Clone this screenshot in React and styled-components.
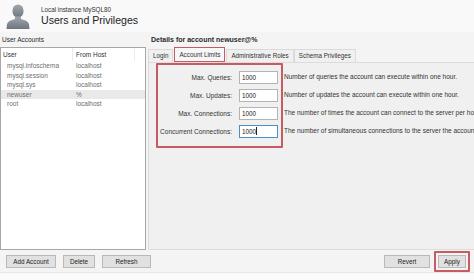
import React from 'react';
import styled, { createGlobalStyle } from 'styled-components';

const GlobalStyle = createGlobalStyle`
  html, body {
    margin: 0;
    padding: 0;
    background: #f4f4f4;
  }
  body {
    font-family: "Liberation Sans", Arial, sans-serif;
    color: #1e1e1e;
  }
`;

const Window = styled.div`
  width: 474px;
  height: 280px;
  display: flex;
  flex-direction: column;
  background: #f4f4f4;
  overflow: hidden;
`;

const Header = styled.div`
  height: 32px;
  display: flex;
  align-items: center;
  gap: 10px;
  padding-left: 5px;
  background: #f9f9f9;
`;

const Titles = styled.div`
  display: flex;
  flex-direction: column;
  gap: 1px;
`;

const Instance = styled.div`
  font-size: 6.3px;
  color: #333;
`;

const Title = styled.div`
  font-size: 10.6px;
  color: #222;
`;

const Body = styled.div`
  height: 218px;
  display: flex;
`;

const LeftColumn = styled.div`
  width: 146px;
  display: flex;
  flex-direction: column;
`;

const RightColumn = styled.div`
  flex: 1;
  margin-left: 2px;
  display: flex;
  flex-direction: column;
  min-width: 0;
`;

const SectionLabel = styled.div`
  height: 15px;
  line-height: 15px;
  padding-left: ${({ $indent }) => $indent}px;
  font-size: ${({ $bold }) => ($bold ? '7px' : '6.5px')};
  font-weight: ${({ $bold }) => ($bold ? 700 : 400)};
  color: #2a2a2a;
`;

const ListBox = styled.div`
  flex: 1;
  background: #fff;
  border: 1px solid #a7a7a7;
  display: flex;
  flex-direction: column;
`;

const ListHeader = styled.div`
  height: 13px;
  display: grid;
  grid-template-columns: 72px 62px 1fr;
  font-size: 6.5px;
  color: #333;
`;

const HeaderCell = styled.div`
  padding-left: ${({ $pad }) => $pad}px;
  line-height: 13px;
  border-right: 1px solid #ececec;
`;

const ListRow = styled.div`
  height: 9.6px;
  display: grid;
  grid-template-columns: 72px 1fr;
  font-size: 6.5px;
  line-height: 9.6px;
  color: #6e6e6e;
  background: ${({ $selected }) => ($selected ? '#e9e9e9' : 'transparent')};
`;

const RowCell = styled.div`
  padding-left: ${({ $pad }) => $pad}px;
  white-space: nowrap;
`;

const TabStrip = styled.div`
  height: 15px;
  display: flex;
  align-items: flex-end;
`;

const Tab = styled.div`
  height: ${({ $active }) => ($active ? 13 : 12)}px;
  line-height: ${({ $active }) => ($active ? 13 : 12)}px;
  padding: 0 ${({ $pad }) => $pad}px;
  font-size: 6.3px;
  color: #333;
  white-space: nowrap;
  background: ${({ $active }) => ($active ? '#f7f7f7' : '#f0f0f0')};
  border: ${({ $active }) => ($active ? '1.5px solid #c75b63' : '1px solid #dadada')};
  border-bottom: ${({ $active }) => ($active ? '1.5px solid #c75b63' : 'none')};
  margin-left: ${({ $active }) => ($active ? '1px' : '0')};
  margin-right: ${({ $active }) => ($active ? '1px' : '0')};
`;

const Pane = styled.div`
  flex: 1;
  background: #f0f0f0;
  border: 1px solid #dcdcdc;
  border-right: none;
  padding: 0 0 0 7px;
  display: flex;
  align-items: flex-start;
  overflow: hidden;
`;

const LimitsBox = styled.div`
  width: 120px;
  padding: 3px 3px 6px 0;
  border: 2px solid #c75b63;
  border-radius: 1px;
  display: flex;
  flex-direction: column;
  flex-shrink: 0;
`;

const FieldRow = styled.div`
  height: 18px;
  display: flex;
  align-items: center;
  justify-content: flex-end;
  gap: 7px;
`;

const FieldLabel = styled.div`
  font-size: 6.5px;
  color: #333;
  white-space: nowrap;
  text-align: right;
`;

const Field = styled.div`
  width: 35px;
  height: 11px;
  line-height: 11px;
  padding-left: 2px;
  font-size: 6.3px;
  color: #222;
  background: #fff;
  border: 1px solid ${({ $focused }) => ($focused ? '#4a90c8' : '#b4b4b4')};
`;

const Caret = styled.span`
  display: inline-block;
  width: 1px;
  height: 8px;
  vertical-align: -1px;
  background: #222;
`;

const Descriptions = styled.div`
  padding-top: 5px;
  margin-left: 1px;
  display: flex;
  flex-direction: column;
`;

const Description = styled.div`
  height: 18px;
  line-height: 18px;
  font-size: 6.5px;
  color: #333;
  white-space: nowrap;
`;

const ButtonBar = styled.div`
  height: 22px;
  display: flex;
  align-items: center;
  padding: 0 4px 0 6px;
`;

const ButtonGroup = styled.div`
  display: flex;
  align-items: center;
  gap: ${({ $gap }) => $gap}px;
`;

const Spacer = styled.div`
  flex: 1;
`;

const Button = styled.div`
  width: ${({ $width }) => $width}px;
  height: 11px;
  line-height: 11px;
  text-align: center;
  font-size: 6.3px;
  color: #222;
  background: #e1e1e1;
  border: 1px solid #b9b9b9;
`;

const Highlight = styled.div`
  padding: 2px 2px;
  border: 2px solid #c75b63;
  border-radius: 1px;
`;

const StatusStrip = styled.div`
  flex: 1;
  background: #fafafa;
  border-top: 1px solid #e6e6e6;
`;

const PersonIcon = () => (
  <svg width="26" height="26" viewBox="0 0 26 26">
    <defs>
      <linearGradient id="person" x1="0" y1="0" x2="0" y2="1">
        <stop offset="0" stopColor="#a3a8b0" />
        <stop offset="1" stopColor="#6f757d" />
      </linearGradient>
    </defs>
    <ellipse cx="13" cy="8" rx="5.6" ry="6.6" fill="url(#person)" />
    <path d="M10 13.5 L10 16 Q3 17.5 2 21 L1.5 26 L24.5 26 L24 21 Q23 17.5 16 16 L16 13.5 Z" fill="url(#person)" />
  </svg>
);

const accounts = [
  { user: 'mysql.infoschema', host: 'localhost' },
  { user: 'mysql.session', host: 'localhost' },
  { user: 'mysql.sys', host: 'localhost' },
  { user: 'newuser', host: '%', selected: true },
  { user: 'root', host: 'localhost' },
];

const limits = [
  { label: 'Max. Queries:', text: 'Number of queries the account can execute within one hour.' },
  { label: 'Max. Updates:', text: 'Number of updates the account can execute within one hour.' },
  { label: 'Max. Connections:', text: 'The number of times the account can connect to the server per hour.' },
  { label: 'Concurrent Connections:', text: 'The number of simultaneous connections to the server the account can have.', focused: true },
];

const tabs = [
  { name: 'Login', pad: 4 },
  { name: 'Account Limits', pad: 4, active: true },
  { name: 'Administrative Roles', pad: 4 },
  { name: 'Schema Privileges', pad: 4 },
];

const App = () => (
  <Window>
    <GlobalStyle />
    <Header>
      <PersonIcon />
      <Titles>
        <Instance>Local instance MySQL80</Instance>
        <Title>Users and Privileges</Title>
      </Titles>
    </Header>

    <Body>
      <LeftColumn>
        <SectionLabel $indent={2}>User Accounts</SectionLabel>
        <ListBox>
          <ListHeader>
            <HeaderCell $pad={2}>User</HeaderCell>
            <HeaderCell $pad={3}>From Host</HeaderCell>
            <div />
          </ListHeader>
          {accounts.map((a) => (
            <ListRow key={a.user} $selected={a.selected}>
              <RowCell $pad={6}>{a.user}</RowCell>
              <RowCell $pad={3}>{a.host}</RowCell>
            </ListRow>
          ))}
        </ListBox>
      </LeftColumn>

      <RightColumn>
        <SectionLabel $indent={3} $bold>Details for account newuser@%</SectionLabel>
        <TabStrip>
          {tabs.map((t) => (
            <Tab key={t.name} $active={t.active} $pad={t.pad}>{t.name}</Tab>
          ))}
        </TabStrip>
        <Pane>
          <LimitsBox>
            {limits.map((l) => (
              <FieldRow key={l.label}>
                <FieldLabel>{l.label}</FieldLabel>
                <Field $focused={l.focused}>
                  1000
                  {l.focused && <Caret />}
                </Field>
              </FieldRow>
            ))}
          </LimitsBox>
          <Descriptions>
            {limits.map((l) => (
              <Description key={l.label}>{l.text}</Description>
            ))}
          </Descriptions>
        </Pane>
      </RightColumn>
    </Body>

    <ButtonBar>
      <ButtonGroup $gap={7}>
        <Button $width={48}>Add Account</Button>
        <Button $width={30}>Delete</Button>
        <Button $width={47}>Refresh</Button>
      </ButtonGroup>
      <Spacer />
      <ButtonGroup $gap={4}>
        <Button $width={44}>Revert</Button>
        <Highlight>
          <Button $width={26}>Apply</Button>
        </Highlight>
      </ButtonGroup>
    </ButtonBar>
    <StatusStrip />
  </Window>
);

export default App;
